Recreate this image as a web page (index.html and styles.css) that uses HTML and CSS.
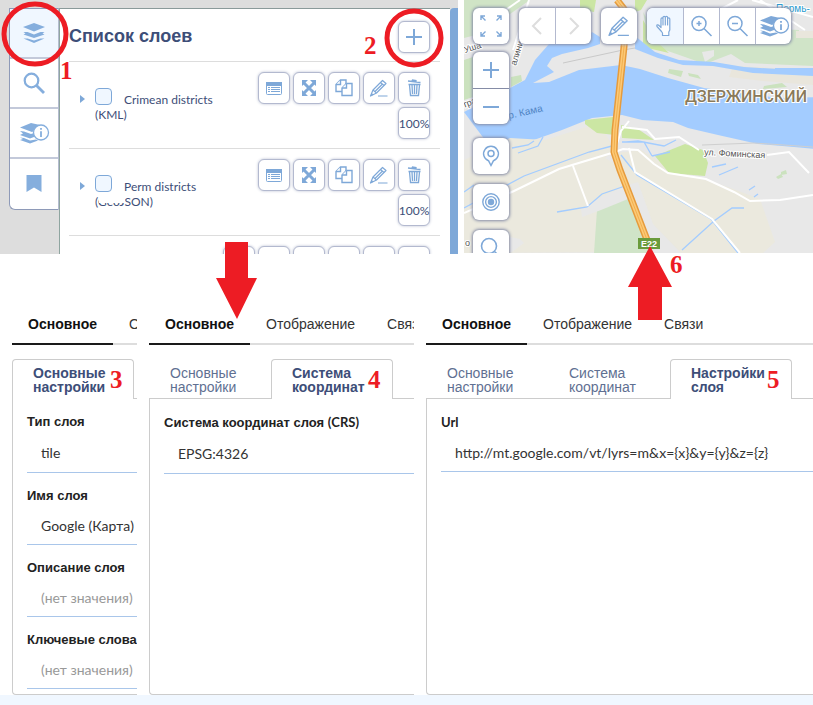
FILE: index.html
```html
<!DOCTYPE html>
<html lang="ru">
<head>
<meta charset="utf-8">
<title>Список слоев</title>
<link rel="stylesheet" href="styles.css">
</head>
<body>
<svg class="defs" width="0" height="0" aria-hidden="true">
  <symbol id="i-list" viewBox="0 0 24 24"><rect x="4.500" y="6.500" width="15" height="12" rx="1" fill="#fff" stroke="currentColor"/><path d="M4 6h16v4H4z" fill="currentColor"/><path d="M6 11.500h2M9 11.500h9M6 13.500h2M9 13.500h9M6 15.500h2M9 15.500h9" stroke="currentColor"/></symbol>
  <symbol id="i-expand" viewBox="0 0 24 24"><path d="M6 6l12 12M18 6L6 18" stroke="currentColor" stroke-width="3"/><path d="M5 4h6l-6 6zM19 4v6l-6-6zM5 20v-6l6 6zM19 20h-6l6-6z" fill="currentColor"/></symbol>
  <symbol id="i-copy" viewBox="0 0 24 24"><g fill="#fff" stroke="currentColor" stroke-width="1.400"><path d="M8.500 4H14v11.500H4V8.500z"/><path d="M4 8.500h4.500V4"/><path d="M14.500 7.500H20v12H10V12z"/><path d="M10 12h4.500V7.500"/></g></symbol>
  <symbol id="i-pencil" viewBox="0 0 24 24"><g fill="none" stroke="currentColor" stroke-width="1.200" stroke-linejoin="round"><path d="M3.500 20L6 14 15.500 4.500l3.500 3L9.500 17z"/><path d="M13.500 6.500l3.500 3M6 14l3.500 3M8 15.500l7.500-7.500M11 20h9.500"/></g><path d="M3.500 20l1.200-3 2 1.700z" fill="currentColor"/></symbol>
  <symbol id="i-trash" viewBox="0 0 24 24"><g fill="none" stroke="currentColor" stroke-width="1.300"><path d="M6 5l12.500 1.500M10 5l.5-1 3.500.5v1.500M6.500 8.500h12M7.500 9l1 10.500h8l1-10.500M10 9l.5 9M12.500 9v9M15 9l-.5 9"/></g></symbol>
  <symbol id="i-plus" viewBox="0 0 24 24"><path d="M12 4v16M4 12h16" stroke="currentColor" stroke-width="2"/></symbol>
  <symbol id="i-minus" viewBox="0 0 24 24"><path d="M4 12h16" stroke="currentColor" stroke-width="2"/></symbol>
  <symbol id="i-layers" viewBox="0 0 24 24"><g fill="currentColor"><path d="M12 2l11 4-11 4.500L1 6z"/><path d="M1.500 11h4l6.500 2.500 6.500-2.500h4l-2 1.500 2 1L12 17 1.500 13.500l2-1z"/><path d="M1.500 17.500h4l6.500 2 6.500-2h4L12 22z"/></g></symbol>
  <symbol id="i-search" viewBox="0 0 24 24"><circle cx="9.500" cy="9.500" r="6.800" fill="none" stroke="currentColor" stroke-width="2.200"/><path d="M14 14l8 8" stroke="currentColor" stroke-width="2.800"/></symbol>
  <symbol id="i-info" viewBox="0 0 32 24"><g fill="currentColor"><path d="M13 2l9 2-4 5-4 2L2 6.500z"/><path d="M2 10l4 .5 7 2.500 3-1v4l-4 1.500L2 14l3-1.500z"/><path d="M2 16.500l4 .5 6 2.500 6-1 2 1-8 3-10-3.500 3-1z"/></g><circle cx="23" cy="11.500" r="7.500" fill="#fff" stroke="currentColor" stroke-width="1.300"/><path d="M23 7v1.700M23 10.200v5.800" stroke="currentColor" stroke-width="1.800"/></symbol>
  <symbol id="i-bookmark" viewBox="0 0 24 24"><path d="M4.500 3h15v17L12 15.500 4.500 20z" fill="currentColor"/></symbol>
  <symbol id="i-full" viewBox="0 0 24 24"><g fill="none" stroke="currentColor" stroke-width="1.400"><path d="M2 6V2h4M2 2l4.500 4.500M18 2h4v4M22 2l-4.500 4.500M2 18v4h4M2 22l4.500-4.500M22 18v4h-4M22 22l-4.500-4.500"/></g></symbol>
  <symbol id="i-left" viewBox="0 0 24 24"><path d="M16 4l-8 8 8 8" fill="none" stroke="currentColor" stroke-width="2"/></symbol>
  <symbol id="i-right" viewBox="0 0 24 24"><path d="M8 4l8 8-8 8" fill="none" stroke="currentColor" stroke-width="2"/></symbol>
  <symbol id="i-hand" viewBox="0 0 24 24"><path d="M8.500 17.500L4 12.500c-.8-1.800 1-2.200 2-1l2 2V5c0-1.500 2-1.500 2 0v6V3.500c0-1.500 2.300-1.500 2.300 0V11 3.500c0-1.500 2.300-1.500 2.300 0V11 5c0-1.500 2.200-1.500 2.200 0v11l-1 2v3.500H9.500V19z" fill="#fff" stroke="currentColor" stroke-width="1.200" stroke-linejoin="round"/></symbol>
  <symbol id="i-zin" viewBox="0 0 24 24"><g fill="none" stroke="currentColor" stroke-width="1.500"><circle cx="9" cy="9.500" r="7"/><path d="M14 14.500l7.500 7.500M9 7v5M6.500 9.500h5"/></g></symbol>
  <symbol id="i-zout" viewBox="0 0 24 24"><g fill="none" stroke="currentColor" stroke-width="1.500"><circle cx="9" cy="9.500" r="7"/><path d="M14 14.500l7.500 7.500M6 9.500h6"/></g></symbol>
  <symbol id="i-lens" viewBox="0 0 24 24"><g fill="none" stroke="currentColor" stroke-width="1.600"><circle cx="10" cy="10" r="7.500"/><path d="M15.500 15.500L21 21"/></g></symbol>
  <symbol id="i-pin" viewBox="0 0 24 24"><g fill="none" stroke="currentColor" stroke-width="1.500"><path d="M12 21.500l-2.500-4.800a7.400 7.400 0 1 1 5 0z"/><circle cx="12" cy="9.500" r="3"/></g></symbol>
  <symbol id="i-target" viewBox="0 0 24 24"><g fill="none" stroke="currentColor" stroke-width="1.400"><circle cx="12" cy="12" r="8.200"/><circle cx="12" cy="12" r="5.400"/></g><circle cx="12" cy="12" r="3.200" fill="currentColor"/></symbol>
</svg>

<main class="page">
  <section class="top">
    <div class="workspace">
      <nav class="rail" aria-label="Инструменты">
        <button class="rail-btn active" aria-label="Слои"><svg><use href="#i-layers"/></svg></button>
        <button class="rail-btn" aria-label="Поиск"><svg><use href="#i-search"/></svg></button>
        <button class="rail-btn" aria-label="Информация"><svg class="wide"><use href="#i-info"/></svg></button>
        <button class="rail-btn" aria-label="Закладки"><svg><use href="#i-bookmark"/></svg></button>
      </nav>
      <div class="layers">
        <header class="layers-head">
          <h1>Список слоев</h1>
          <button class="tool" aria-label="Добавить"><svg><use href="#i-plus"/></svg></button>
        </header>
        <ul class="layer-list">
          <li class="layer">
            <button class="twisty" aria-label="Развернуть"></button>
            <div class="layer-name"><input type="checkbox" id="l1"><label for="l1">Crimean districts (KML)</label></div>
            <div class="tools">
              <button class="tool" aria-label="Таблица"><svg><use href="#i-list"/></svg></button>
              <button class="tool" aria-label="Показать"><svg><use href="#i-expand"/></svg></button>
              <button class="tool" aria-label="Копировать"><svg><use href="#i-copy"/></svg></button>
              <button class="tool" aria-label="Изменить"><svg><use href="#i-pencil"/></svg></button>
              <button class="tool" aria-label="Удалить"><svg><use href="#i-trash"/></svg></button>
              <button class="tool">100%</button>
            </div>
          </li>
          <li class="layer">
            <button class="twisty" aria-label="Развернуть"></button>
            <div class="layer-name faded"><input type="checkbox" id="l2"><label for="l2">Perm districts (GeoJSON)</label></div>
            <div class="tools">
              <button class="tool" aria-label="Таблица"><svg><use href="#i-list"/></svg></button>
              <button class="tool" aria-label="Показать"><svg><use href="#i-expand"/></svg></button>
              <button class="tool" aria-label="Копировать"><svg><use href="#i-copy"/></svg></button>
              <button class="tool" aria-label="Изменить"><svg><use href="#i-pencil"/></svg></button>
              <button class="tool" aria-label="Удалить"><svg><use href="#i-trash"/></svg></button>
              <button class="tool">100%</button>
            </div>
          </li>
          <li class="layer">
            <button class="twisty" aria-label="Развернуть"></button>
            <div class="layer-name"><input type="checkbox" aria-label="Слой"></div>
            <div class="tools six">
              <button class="tool" aria-label="Стиль"></button>
              <button class="tool" aria-label="Таблица"></button>
              <button class="tool" aria-label="Показать"></button>
              <button class="tool" aria-label="Копировать"></button>
              <button class="tool" aria-label="Изменить"></button>
              <button class="tool" aria-label="Удалить"></button>
            </div>
          </li>
        </ul>
      </div>
      <div class="scrollbar"></div>
    </div>

    <div class="map">
      <svg class="map-art" viewBox="464 0 349 253" preserveAspectRatio="xMinYMin slice">
        <rect x="464" width="349" height="253" fill="#e8e8e8"/>
        <path d="M464 0h66l-20 14-30 20-16 4z" fill="#d0e4c6"/>
        <path d="M464 60l12-4v40l-12 4zM511 77l10-2 1 6-11 6z" fill="#cbe2be"/>
        <path d="M580 0h16l-2 12-14-2zM635 0h12l-6 10-6 2z" fill="#cbe6a3"/>
        <path d="M643 12l6 30 16 8 40 14 26-10 14 9 68 3V38h-14V30l-150-8z" fill="#d0e4c8"/>
        <path d="M643 20v27l26 6-13-12z" fill="#cbe6a3"/>
        <path d="M733 66l80 4v15l-50-4-34-4z" fill="#e9e6dc"/>
        <path d="M796 31h17v7h-17z" fill="#e9e6dc"/>
        <path d="M702 52l12-2v6l-9 6z" fill="#e8e8e8"/>
        <path d="M464 112l46-24 15-8 10-20 14-16h30l13-12 8 5v7l-12 4-26 6-10 4-5 8 7 6-21 11 16-1 30-12 42-5 19 4 28 9 36 10 29 4 46 6 48-1v53l-33-3-36-3-40-9-30-7-15-6-31-2-20-5-30 3-30 12-31 11-31 19z" fill="#a3ccff"/>
        <path d="M635 36l20 16 24 8 35 2 30 5 69 4v5l-60-3-40-7-30-1-25-7-23-9zM775 68h38v3h-38z" fill="#a3ccff"/>
        <path d="M563 63l60-13 12-2" stroke="#c9c9c9" fill="none"/>
        <path d="M669 69l14 2-2 6-13-4zM688 73l10 2 3 4-12-3zM764 86l18-3 5 4-24 2z" fill="#cbe2be"/>
        <path d="M464 160l46-22 35 2 54-17 16 27-10 8 24 14 15 80-180 1z" fill="#ebe9de"/>
        <path d="M616 153l25-3 34 21 50 15 35 13 15 43-12 11H652l-16-60z" fill="#ebe9de"/>
        <path d="M585 120l28-3 2 18-18-2-12-9zM621 125l17 4 16 11-32-2zM655 156l30-12 18 6 5 13-3 13-36-3z" fill="#cbe6a3"/>
        <path d="M597 210l18-10 16-3 20 56h-57z" fill="#d0e4c8"/>
        <path d="M581 209l20-12 22-10 5 12-27 11-19 7z" fill="#e8e8e8"/>
        <path d="M628 185l10-3 15 42 28 29h-29z" fill="#e8e8e8"/>
        <path d="M510 237l10 2 4 4-12 9h-2z" fill="#e8e8e8"/>
        <path d="M776 177l5-3 2 3-5 2zM781 172l5-2 1 4-6 1z" fill="#cbe2be"/>
        <g fill="none" stroke="#a3ccff" stroke-width="1.300">
          <path d="M512 148l16-3 6-4M518 153l20-7 5-9M464 192l10-7M464 208l60-32 65-24 23-6M557 212l30-5 15-13 23-8M621 155l16 20 74 44 27 34M682 250l32-29 18-13h12M622 142h22l8 14M626 142l12-1 26 5 12-6M652 156l18-4M712 167l14-3M719 175l19-8M749 190l6-4M754 197l4-3"/>
        </g>
        <g fill="none" stroke="#fff" stroke-width="2">
          <path d="M480 28l40-28M529 0l-16 50M464 213l50-22 45-22 56-17 8-3 15 1 16 14 14 9 38 6 28 13 16 9 30-1 33-5M573 166l15 40M614 153l7-22 8-10M622 127l25 3 8 9 24-2 20 13M629 148l6 24 77 47 28 34M767 155l22-3 20 21M700 20l38-20M752 0l61 17M760 0l45 30"/>
        </g>
        <path d="M702 145l52-2 59 4" fill="none" stroke="#cfcfcf"/>
        <path d="M617 0l7 9 2 13-2 25-9 83-1 22 6 18 29 75" fill="none" stroke="#e69b3c" stroke-width="7"/>
        <path d="M617 0l7 9 2 13-2 25-9 83-1 22 6 18 29 75" fill="none" stroke="#fdc976" stroke-width="4"/>
        <path d="M617 0l7 9 2 13-2 25-9 83-1 22 6 18 29 75" fill="none" stroke="#f0b050"/>
        <g class="map-text">
          <text x="685" y="102" class="city">ДЗЕРЖИНСКИЙ</text>
          <text x="704" y="155" transform="rotate(3 704 155)">ул. Фоминская</text>
          <text x="509" y="119" transform="rotate(-13 509 119)" class="water">р. Кама</text>
          <text x="516" y="66" transform="rotate(-73 516 66)">алинина</text>
          <text x="465" y="53" transform="rotate(-18 465 53)">Уша</text>
          <text x="464" y="108" transform="rotate(-22 464 108)">тра</text>
          <text x="465" y="246">о</text>
          <text x="776" y="12" class="station">Пермь-</text>
        </g>
        <rect x="638" y="238" width="22" height="11" fill="#6a9b3c"/>
        <text x="641" y="247" class="road">E22</text>
      </svg>
      <div class="map-ui">
        <div class="bar">
          <div class="group"><button aria-label="Во весь экран"><svg><use href="#i-full"/></svg></button></div>
          <div class="group muted"><button aria-label="Назад"><svg><use href="#i-left"/></svg></button><button aria-label="Вперед"><svg><use href="#i-right"/></svg></button></div>
          <div class="group"><button aria-label="Рисовать"><svg class="large"><use href="#i-pencil"/></svg></button></div>
          <div class="group"><button class="on" aria-label="Перемещение"><svg><use href="#i-hand"/></svg></button><button aria-label="Приблизить"><svg><use href="#i-zin"/></svg></button><button aria-label="Отдалить"><svg><use href="#i-zout"/></svg></button><button aria-label="Информация"><svg class="wide"><use href="#i-info"/></svg></button></div>
        </div>
        <div class="stack">
          <div class="group column"><button aria-label="Крупнее"><svg><use href="#i-plus"/></svg></button><button aria-label="Мельче"><svg><use href="#i-minus"/></svg></button></div>
          <div class="group"><button aria-label="Место"><svg><use href="#i-pin"/></svg></button></div>
          <div class="group"><button aria-label="Центр"><svg><use href="#i-target"/></svg></button></div>
          <div class="group"><button aria-label="Найти"><svg><use href="#i-lens"/></svg></button></div>
        </div>
      </div>
    </div>
  </section>

  <section class="forms">
    <form class="form">
      <div class="tabs"><button type="button" class="tab current">Основное</button><button type="button" class="tab">Отображение</button></div>
      <div class="subtabs"><button type="button" class="subtab current">Основные настройки</button></div>
      <div class="sheet">
        <div class="field"><label for="f1">Тип слоя</label><select id="f1"><option>tile</option></select></div>
        <div class="field"><label for="f2">Имя слоя</label><input id="f2" type="text" value="Google (Карта)"></div>
        <div class="field"><label for="f3">Описание слоя</label><input id="f3" type="text" placeholder="(нет значения)"></div>
        <div class="field"><label for="f4">Ключевые слова</label><input id="f4" type="text" placeholder="(нет значения)"></div>
      </div>
    </form>
    <form class="form">
      <div class="tabs"><button type="button" class="tab current">Основное</button><button type="button" class="tab">Отображение</button><button type="button" class="tab">Связи</button></div>
      <div class="subtabs"><button type="button" class="subtab">Основные настройки</button><button type="button" class="subtab current">Система координат</button></div>
      <div class="sheet">
        <div class="field"><label for="f5">Система координат слоя <span class="latin">(CRS)</span></label><select id="f5"><option>EPSG:4326</option></select></div>
      </div>
    </form>
    <form class="form">
      <div class="tabs"><button type="button" class="tab current">Основное</button><button type="button" class="tab">Отображение</button><button type="button" class="tab">Связи</button></div>
      <div class="subtabs"><button type="button" class="subtab">Основные настройки</button><button type="button" class="subtab">Система координат</button><button type="button" class="subtab current">Настройки слоя</button></div>
      <div class="sheet">
        <div class="field"><label for="f6"><span class="latin">Url</span></label><input id="f6" type="text" value="http://mt.google.com/vt/lyrs=m&amp;x={x}&amp;y={y}&amp;z={z}"></div>
      </div>
    </form>
  </section>
  <footer class="footer"></footer>

  <svg class="notes" viewBox="0 0 813 705" preserveAspectRatio="xMinYMin meet">
    <g fill="none" stroke="#ed1c24" stroke-width="5"><ellipse cx="35" cy="34" rx="31" ry="30"/><circle cx="414" cy="38" r="27"/></g>
    <path d="M225 242h23v36h9l-20 41-21-41h9zM650 246l22 41h-10v33h-24v-33h-10z" fill="#ed1c24"/>
    <text x="60" y="79">1</text><text x="364" y="54">2</text><text x="110" y="388">3</text><text x="368" y="388">4</text><text x="767" y="388">5</text><text x="670" y="273">6</text>
  </svg>
</main>
</body>
</html>
```
FILE: styles.css
```css
* { box-sizing: border-box; }
body { margin: 0; background: #fff; font-family: Lato, "Liberation Sans", sans-serif; color: #3d4e78; }
button { font: inherit; color: inherit; margin: 0; padding: 0; border: 0; background: none; }
svg { display: block; width: 24px; height: 24px; }
.defs { position: absolute; width: 0; height: 0; }
.page { position: relative; min-height: 100vh; display: flex; flex-direction: column; overflow: hidden; }

.top { display: grid; grid-template-columns: minmax(0, 458fr) minmax(0, 349fr); gap: 6px; height: 254px; }
.workspace { display: flex; align-items: flex-start; padding: 8px 0 0 9px; background: #ddd; height: 254px; overflow: hidden; }
.rail { flex: 0 0 50px; display: flex; flex-direction: column; background: #fff; border: 1px solid #8e9ab8; border-right-color: #b4bccf; border-radius: 0 0 0 6px; overflow: hidden; }
.rail-btn { height: 50px; display: flex; align-items: center; justify-content: center; color: #85aedd; border-bottom: 2px solid #c3c9da; }
.rail-btn:last-child { border-bottom: 0; }
.rail-btn.active { background: #f0f7ff; }
.wide { width: 32px; }
.large { width: 28px; height: 28px; }
.layers { flex: 1; min-width: 0; padding: 0 10px 0 9px; background: #fff; height: 246px; border-top: 1px solid #8a9a9a; border-left: 1px solid #8fa5a0; }
.scrollbar { flex: 0 0 8px; height: 246px; background: #7ea8d8; border-radius: 4px 0 0 0; }
.layers-head { height: 53px; display: flex; align-items: center; justify-content: space-between; padding: 3px 10px 0 0; border-bottom: 1px solid #ddd; }
h1 { margin: 0; font: bold 18px "Liberation Sans", sans-serif; }
.layer-list { list-style: none; margin: 0; padding: 0; }
.layer { display: flex; align-items: flex-start; height: 87px; padding: 10px 10px 0 11px; border-bottom: 1px solid #ddd; }
.twisty { flex: none; width: 5px; margin-top: 23px; border-left: 5px solid #7ea8d8; border-top: 4px solid transparent; border-bottom: 4px solid transparent; }
.layer-name { flex: 0 1 135px; position: relative; margin: 16px 0 0 10px; font-size: 12px; line-height: 15px; }
.layer-name input { appearance: none; width: 17px; height: 17px; margin: 0 12px 0 0; border: 1px solid #7ea8d8; border-radius: 4px; background: #f0f7ff; vertical-align: -1px; }
.faded::after { content: ""; position: absolute; left: 4px; top: 19px; width: 26px; height: 9px; background: #fff; }
.tools { flex: none; margin-left: auto; display: grid; grid-template-columns: repeat(5, 32px); gap: 3px; }
.tools.six { grid-template-columns: repeat(6, 32px); }
.tool { width: 32px; height: 32px; display: flex; align-items: center; justify-content: center; border: 1px solid #b3b9cf; border-radius: 6px; background: #fff; box-shadow: 0 0 3px #b9bfd2; color: #7ea8d8; }
.tools .tool:nth-child(6) { grid-column: -2; font-size: 12px; color: #3d4e78; }

.map { position: relative; height: 253px; overflow: hidden; }
.map-art { width: 100%; height: 100%; }
.map-text text { font: 9px "Liberation Sans", sans-serif; fill: #555; stroke: #fff; stroke-width: 2px; paint-order: stroke; }
.map-text .city { font: 500 16px Roboto, sans-serif; fill: #8a7a5a; }
.map-text .water { fill: #4f84c4; stroke: none; font-size: 10px; }
.map-text .station { fill: #2a9bd0; font-size: 10px; }
.road { font: bold 9px "Liberation Sans", sans-serif; fill: #fff; }
.map-ui { position: absolute; inset: 0; padding: 8px 0 0 9px; color: #7ea8d8; }
.bar { display: flex; gap: 10px; }
.stack { display: flex; flex-direction: column; align-items: flex-start; gap: 10px; margin-top: 8px; }
.group { display: flex; flex: none; border-radius: 6px; background: #fff; box-shadow: 0 0 3px 1px #858ca6; overflow: hidden; }
.group.column { flex-direction: column; margin-bottom: 4px; }
.group button { width: 36px; height: 36px; display: flex; align-items: center; justify-content: center; }
.group button + button { border-left: 1px solid #b3b9cf; }
.group.column button + button { border-left: 0; border-top: 1px solid #858ca6; }
.group .on { background: #f0f7ff; }
.muted { color: #ddd; }

.forms { flex: 1; display: grid; grid-template-columns: minmax(0, 125fr) minmax(0, 265fr) minmax(0, 387fr); gap: 12px; padding: 50px 0 0 12px; }
.form { display: flex; flex-direction: column; overflow: hidden; font-size: 14px; }
.tabs { display: flex; height: 41px; border-bottom: 2px solid #ddd; }
.tab { flex: none; height: 41px; padding: 0 16px; color: #333; font-family: "Liberation Sans", sans-serif; border-bottom: 2px solid #ddd; }
.tab.current { font-weight: bold; color: #111; border-bottom-color: #1a1a1a; }
.subtabs { display: flex; margin-top: 14px; height: 40px; border-bottom: 1px solid #ccc; }
.subtab { flex: none; width: 122px; height: 40px; padding: 0 16px 0 20px; border: 1px solid transparent; border-bottom: 0; text-align: left; font: 14px/14px "Liberation Sans", sans-serif; color: #5f7092; }
.subtab.current { font-weight: bold; color: #3d4e78; border-color: #ccc; border-radius: 4px 4px 0 0; background: #fff; }
.sheet { flex: 1; border: 1px solid #ccc; border-width: 0 0 1px 1px; border-radius: 0 0 0 4px; padding: 14px 0 5px 14px; }
.field { display: flex; flex-direction: column; margin-bottom: 14px; }
.field:last-child { margin-bottom: 0; }
.field label { font: bold 13px/18px "Liberation Sans", sans-serif; color: #222; white-space: nowrap; }
.latin { font-family: Lato, sans-serif; }
.field input, .field select { appearance: none; width: 100%; height: 40px; margin: 0; padding: 2px 0 0 14px; border: 0; border-bottom: 1px solid #a9c6ea; border-radius: 0; background: none; font: 14px Lato, "Liberation Sans", sans-serif; color: #333; }
.field select { height: 42px; }
.field input::placeholder { color: #999; opacity: 1; }
.footer { height: 10px; background: #f0f7ff; }

.notes { position: absolute; left: 0; top: 0; width: 813px; height: 705px; pointer-events: none; }
.notes text { font: bold 25px "Liberation Serif", serif; fill: #ed1c24; }
```
